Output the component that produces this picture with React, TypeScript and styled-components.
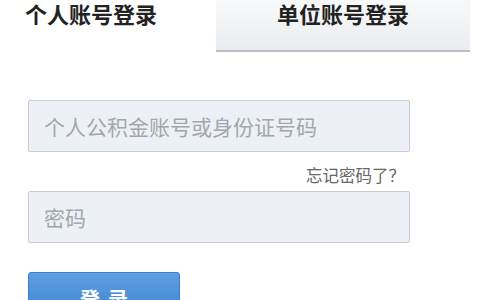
import styled, { createGlobalStyle } from 'styled-components';

const GlobalStyle = createGlobalStyle`
  html, body {
    margin: 0;
    padding: 0;
    background: #ffffff;
    font-family: "Noto Sans CJK SC", "Liberation Sans", sans-serif;
  }
`;

const Page = styled.div`
  width: 480px;
  height: 300px;
  overflow: hidden;
  background: #fff;
`;

const TabBar = styled.div`
  display: flex;
  height: 52px;
`;

interface TabProps {
  active?: boolean;
}

const Tab = styled.div<TabProps>`
  box-sizing: border-box;
  height: 52px;
  width: ${props => (props.active ? '216px' : '254px')};
  padding: ${props => (props.active ? '2px 0 0 25px' : '2px 0 0 0')};
  text-align: ${props => (props.active ? 'left' : 'center')};
  font-size: 22px;
  font-weight: 700;
  line-height: 22px;
  color: #222;
  background: ${props =>
    props.active ? '#fff' : 'linear-gradient(#f8f9fa, #eaedf0)'};
  border-bottom: ${props => (props.active ? 'none' : '2px solid #bcc0c4')};
  cursor: pointer;
`;

const Form = styled.form`
  display: flex;
  flex-direction: column;
  padding: 48px 0 0 28px;
  width: 382px;
`;

const Input = styled.input`
  box-sizing: border-box;
  width: 382px;
  height: 52px;
  padding: 0 15px;
  border: 1px solid #c9cdd3;
  border-radius: 2px;
  background: #edf1f7;
  font-family: "Noto Sans CJK SC", sans-serif;
  font-size: 21px;
  color: #333;
  outline: none;

  &::placeholder {
    color: #a3a7ab;
  }
`;

const Forgot = styled.a`
  align-self: flex-end;
  margin: 12px 5px 5px 0;
  font-size: 16.5px;
  line-height: 22px;
  color: #666;
  text-decoration: none;
`;

const SubmitButton = styled.button`
  box-sizing: border-box;
  width: 152px;
  height: 44px;
  margin-top: 29px;
  border: 1px solid #3b7dc8;
  border-radius: 3px;
  background: linear-gradient(#5f9fe2, #3f85d2);
  color: #fff;
  font-family: "Noto Sans CJK SC", sans-serif;
  font-size: 20px;
  font-weight: 700;
  letter-spacing: 8px;
  padding: 9px 0 0 8px;
  line-height: 24px;
  text-align: center;
  vertical-align: top;
`;

export default function App() {
  return (
    <Page>
      <GlobalStyle />
      <TabBar>
        <Tab active>个人账号登录</Tab>
        <Tab>单位账号登录</Tab>
      </TabBar>
      <Form onSubmit={e => e.preventDefault()}>
        <Input placeholder="个人公积金账号或身份证号码" />
        <Forgot href="#">忘记密码了？</Forgot>
        <Input type="password" placeholder="密码" />
        <SubmitButton type="submit">登录</SubmitButton>
      </Form>
    </Page>
  );
}
